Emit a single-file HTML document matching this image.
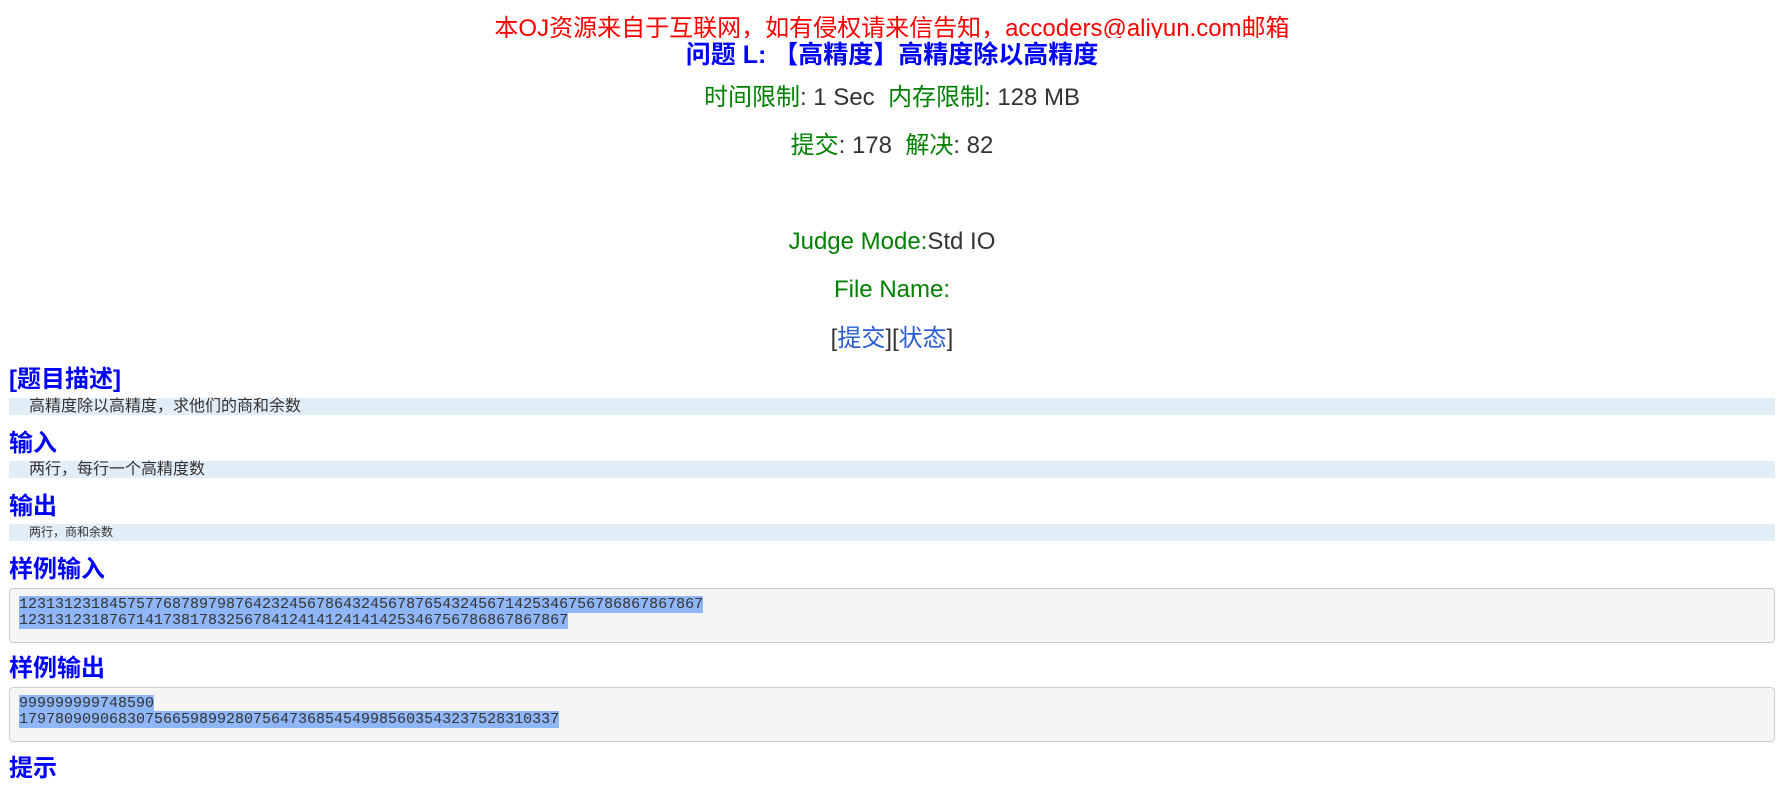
<!DOCTYPE html>
<html><head><meta charset="utf-8"><style>
body{margin:0;width:1789px;height:804px;overflow:hidden;background:#fff;font-family:"Liberation Sans","Noto Sans CJK SC",sans-serif;color:#333;}
.wrap{position:relative;width:1784px;}
.c{position:absolute;left:0;width:1784px;text-align:center;white-space:nowrap;}
.banner{top:14px;height:24px;overflow:hidden;color:#f00;font-size:24px;line-height:30px;}
.title{top:41px;color:#00f;font-weight:bold;font-size:25px;line-height:28px;}
.l{font-size:24px;line-height:28px;}
.g{color:green}
a{color:#2a5bd7;text-decoration:none}
h2{position:absolute;left:9px;margin:0;color:#00f;font-size:24px;font-weight:bold;line-height:28px;}
.band{position:absolute;left:9px;width:1766px;height:17px;background:#e1edf7;font-size:16px;line-height:17px;}
.band span{margin-left:20px;}
.box{position:absolute;left:9px;width:1755px;height:53px;background:#f5f5f5;border:1px solid #ccc;border-radius:4px;padding:0 0 0 9px;box-sizing:content-box;}
.box pre{margin:8px 0 0 0;font-family:"Liberation Mono",monospace;font-size:15px;line-height:16px;color:#333;}
.box pre span{background:#8fb6f7;}
</style></head><body><div class="wrap">
<div class="c banner">本OJ资源来自于互联网，如有侵权请来信告知，accoders@aliyun.com邮箱</div>
<div class="c title">问题 L: 【高精度】高精度除以高精度</div>
<div class="c l" style="top:84px"><span class="g">时间限制</span>: 1 Sec&nbsp; <span class="g">内存限制</span>: 128 MB</div>
<div class="c l" style="top:132px"><span class="g">提交</span>: 178&nbsp; <span class="g">解决</span>: 82</div>
<div class="c l" style="top:228px"><span class="g">Judge Mode:</span>Std IO</div>
<div class="c l" style="top:276px"><span class="g">File Name:</span></div>
<div class="c l" style="top:325px">[<a>提交</a>][<a>状态</a>]</div>
<h2 style="top:366px">[题目描述]</h2>
<div class="band" style="top:398px"><span>高精度除以高精度，求他们的商和余数</span></div>
<h2 style="top:430px">输入</h2>
<div class="band" style="top:461px"><span>两行，每行一个高精度数</span></div>
<h2 style="top:493px">输出</h2>
<div class="band" style="top:524px;font-size:12px"><span>两行，商和余数</span></div>
<h2 style="top:556px">样例输入</h2>
<div class="box" style="top:588px"><pre><span>1231312318457577687897987642324567864324567876543245671425346756786867867867</span>
<span>1231312318767141738178325678412414124141425346756786867867867</span></pre></div>
<h2 style="top:655px">样例输出</h2>
<div class="box" style="top:687px"><pre><span>999999999748590</span>
<span>179780909068307566598992807564736854549985603543237528310337</span></pre></div>
<h2 style="top:755px">提示</h2>
</div></body></html>
